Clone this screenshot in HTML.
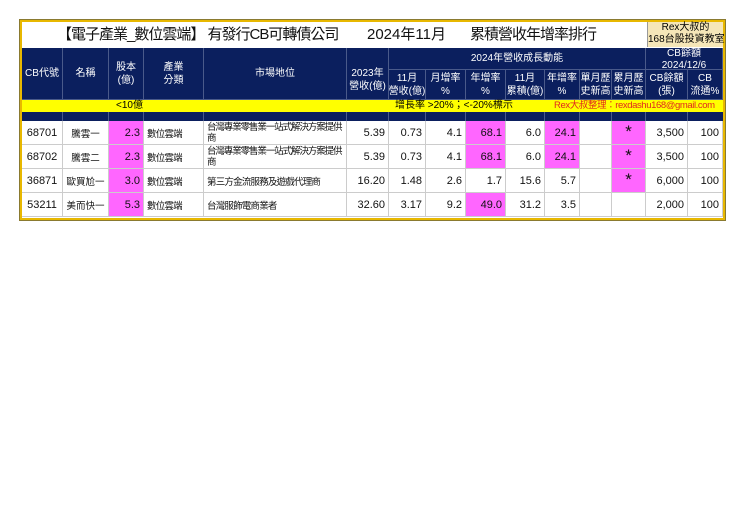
<!DOCTYPE html>
<html><head><meta charset="utf-8"><style>
body{margin:0;background:#fff;width:740px;height:523px;position:relative;overflow:hidden;font-family:"Liberation Sans","Noto Sans CJK TC",sans-serif;}
div{position:absolute;box-sizing:border-box;white-space:nowrap;}
.frame{left:20px;top:20px;width:705px;height:200px;border:2px solid #e8b800;outline:1px solid #8a7a30;}
.tt{top:25px;font-size:15px;line-height:20px;color:#111;letter-spacing:-1px;}
.rex{left:647px;top:22px;width:76px;height:25px;background:#f5e6b8;font-size:10px;line-height:12px;text-align:center;border-left:1px solid #999;}
.nv{background:#0b1f5e;}
.h{background:#0b1f5e;color:#fff;font-size:10px;line-height:13px;text-align:center;display:flex;align-items:center;justify-content:center;border-right:1px solid #4a5a8a;border-bottom:1px solid #4a5a8a;}
.yl{left:22px;top:100px;width:701px;height:12px;background:#ffff00;}
.yt{top:100px;font-size:10px;line-height:12px;}
.vl{top:112px;height:9px;width:1px;background:#4a5a8a;}
.d{height:24px;border-right:1px solid #ccc;border-bottom:1px solid #ccc;font-size:11px;display:flex;align-items:center;justify-content:flex-end;padding-right:3px;color:#111;}
.dc{justify-content:center;padding:0;font-size:9.5px;}
.dl{justify-content:flex-start;padding-left:3px;font-size:9.5px;letter-spacing:-0.8px;}
.dm{justify-content:flex-start;padding-left:3px;padding-right:0;font-size:9.5px;letter-spacing:-1.1px;line-height:11px;white-space:normal;}
.p{background:#ff66ff;}
.st{justify-content:center;align-items:flex-start;padding:2px 0 0 0;font-size:17px;line-height:17px;}
</style></head><body>
<div class="frame"></div>
<div class="tt" style="left:57px">【電子產業_數位雲端】 有發行CB可轉債公司</div>
<div class="tt" style="left:367px;letter-spacing:0">2024年11月</div>
<div class="tt" style="left:470px">累積營收年增率排行</div>
<div class="rex">Rex大叔的<br>168台股投資教室</div>

<div class="h" style="left:22px;top:48px;width:41px;height:52px">CB代號</div>
<div class="h" style="left:63px;top:48px;width:46px;height:52px">名稱</div>
<div class="h" style="left:109px;top:48px;width:35px;height:52px">股本<br>(億)</div>
<div class="h" style="left:144px;top:48px;width:60px;height:52px">產業<br>分類</div>
<div class="h" style="left:204px;top:48px;width:143px;height:52px">市場地位</div>
<div class="h" style="left:347px;top:48px;width:42px;height:52px;padding-top:12px">2023年<br>營收(億)</div>
<div class="h" style="left:389px;top:48px;width:257px;height:22px">2024年營收成長動能</div>
<div class="h" style="left:646px;top:48px;width:77px;height:22px;line-height:12px;padding-top:2px">CB餘額<br>2024/12/6</div>
<div class="h" style="left:389px;top:70px;width:37px;height:30px">11月<br>營收(億)</div>
<div class="h" style="left:426px;top:70px;width:40px;height:30px">月增率<br>%</div>
<div class="h" style="left:466px;top:70px;width:40px;height:30px">年增率<br>%</div>
<div class="h" style="left:506px;top:70px;width:39px;height:30px">11月<br>累積(億)</div>
<div class="h" style="left:545px;top:70px;width:35px;height:30px">年增率<br>%</div>
<div class="h" style="left:580px;top:70px;width:32px;height:30px">單月歷<br>史新高</div>
<div class="h" style="left:612px;top:70px;width:34px;height:30px">累月歷<br>史新高</div>
<div class="h" style="left:646px;top:70px;width:42px;height:30px">CB餘額<br>(張)</div>
<div class="h" style="left:688px;top:70px;width:35px;height:30px">CB<br>流通%</div>

<div class="yl"></div>
<div class="yt" style="left:116px">&lt;10億</div>
<div class="yt" style="left:395px">增長率 &gt;20%；&lt;-20%標示</div>
<div class="yt" style="left:554px;color:#e0281e;font-size:9.5px;letter-spacing:-0.4px">Rex大叔整理：rexdashu168@gmail.com</div>
<div class="nv" style="left:22px;top:112px;width:701px;height:9px"></div>
<div class="vl" style="left:62px"></div><div class="vl" style="left:108px"></div><div class="vl" style="left:143px"></div><div class="vl" style="left:203px"></div><div class="vl" style="left:346px"></div><div class="vl" style="left:388px"></div><div class="vl" style="left:425px"></div><div class="vl" style="left:465px"></div><div class="vl" style="left:505px"></div><div class="vl" style="left:544px"></div><div class="vl" style="left:579px"></div><div class="vl" style="left:611px"></div><div class="vl" style="left:645px"></div><div class="vl" style="left:687px"></div>

<!-- row 1 -->
<div class="d dc" style="left:22px;top:121px;width:41px;font-size:11px">68701</div>
<div class="d dc" style="left:63px;top:121px;width:46px">騰雲一</div>
<div class="d p" style="left:109px;top:121px;width:35px">2.3</div>
<div class="d dl" style="left:144px;top:121px;width:60px">數位雲端</div>
<div class="d dm" style="left:204px;top:121px;width:143px">台灣專業零售業一站式解決方案提供商</div>
<div class="d" style="left:347px;top:121px;width:42px">5.39</div>
<div class="d" style="left:389px;top:121px;width:37px">0.73</div>
<div class="d" style="left:426px;top:121px;width:40px">4.1</div>
<div class="d p" style="left:466px;top:121px;width:40px">68.1</div>
<div class="d" style="left:506px;top:121px;width:39px">6.0</div>
<div class="d p" style="left:545px;top:121px;width:35px">24.1</div>
<div class="d" style="left:580px;top:121px;width:32px"></div>
<div class="d p st" style="left:612px;top:121px;width:34px">*</div>
<div class="d" style="left:646px;top:121px;width:42px">3,500</div>
<div class="d" style="left:688px;top:121px;width:35px">100</div>
<!-- row 2 -->
<div class="d dc" style="left:22px;top:145px;width:41px;font-size:11px">68702</div>
<div class="d dc" style="left:63px;top:145px;width:46px">騰雲二</div>
<div class="d p" style="left:109px;top:145px;width:35px">2.3</div>
<div class="d dl" style="left:144px;top:145px;width:60px">數位雲端</div>
<div class="d dm" style="left:204px;top:145px;width:143px">台灣專業零售業一站式解決方案提供商</div>
<div class="d" style="left:347px;top:145px;width:42px">5.39</div>
<div class="d" style="left:389px;top:145px;width:37px">0.73</div>
<div class="d" style="left:426px;top:145px;width:40px">4.1</div>
<div class="d p" style="left:466px;top:145px;width:40px">68.1</div>
<div class="d" style="left:506px;top:145px;width:39px">6.0</div>
<div class="d p" style="left:545px;top:145px;width:35px">24.1</div>
<div class="d" style="left:580px;top:145px;width:32px"></div>
<div class="d p st" style="left:612px;top:145px;width:34px">*</div>
<div class="d" style="left:646px;top:145px;width:42px">3,500</div>
<div class="d" style="left:688px;top:145px;width:35px">100</div>
<!-- row 3 -->
<div class="d dc" style="left:22px;top:169px;width:41px;font-size:11px">36871</div>
<div class="d dc" style="left:63px;top:169px;width:46px">歐買尬一</div>
<div class="d p" style="left:109px;top:169px;width:35px">3.0</div>
<div class="d dl" style="left:144px;top:169px;width:60px">數位雲端</div>
<div class="d dl" style="left:204px;top:169px;width:143px">第三方金流服務及遊戲代理商</div>
<div class="d" style="left:347px;top:169px;width:42px">16.20</div>
<div class="d" style="left:389px;top:169px;width:37px">1.48</div>
<div class="d" style="left:426px;top:169px;width:40px">2.6</div>
<div class="d" style="left:466px;top:169px;width:40px">1.7</div>
<div class="d" style="left:506px;top:169px;width:39px">15.6</div>
<div class="d" style="left:545px;top:169px;width:35px">5.7</div>
<div class="d" style="left:580px;top:169px;width:32px"></div>
<div class="d p st" style="left:612px;top:169px;width:34px">*</div>
<div class="d" style="left:646px;top:169px;width:42px">6,000</div>
<div class="d" style="left:688px;top:169px;width:35px">100</div>
<!-- row 4 -->
<div class="d dc" style="left:22px;top:193px;width:41px;font-size:11px">53211</div>
<div class="d dc" style="left:63px;top:193px;width:46px">美而快一</div>
<div class="d p" style="left:109px;top:193px;width:35px">5.3</div>
<div class="d dl" style="left:144px;top:193px;width:60px">數位雲端</div>
<div class="d dl" style="left:204px;top:193px;width:143px">台灣服飾電商業者</div>
<div class="d" style="left:347px;top:193px;width:42px">32.60</div>
<div class="d" style="left:389px;top:193px;width:37px">3.17</div>
<div class="d" style="left:426px;top:193px;width:40px">9.2</div>
<div class="d p" style="left:466px;top:193px;width:40px">49.0</div>
<div class="d" style="left:506px;top:193px;width:39px">31.2</div>
<div class="d" style="left:545px;top:193px;width:35px">3.5</div>
<div class="d" style="left:580px;top:193px;width:32px"></div>
<div class="d" style="left:612px;top:193px;width:34px"></div>
<div class="d" style="left:646px;top:193px;width:42px">2,000</div>
<div class="d" style="left:688px;top:193px;width:35px">100</div>
</body></html>
